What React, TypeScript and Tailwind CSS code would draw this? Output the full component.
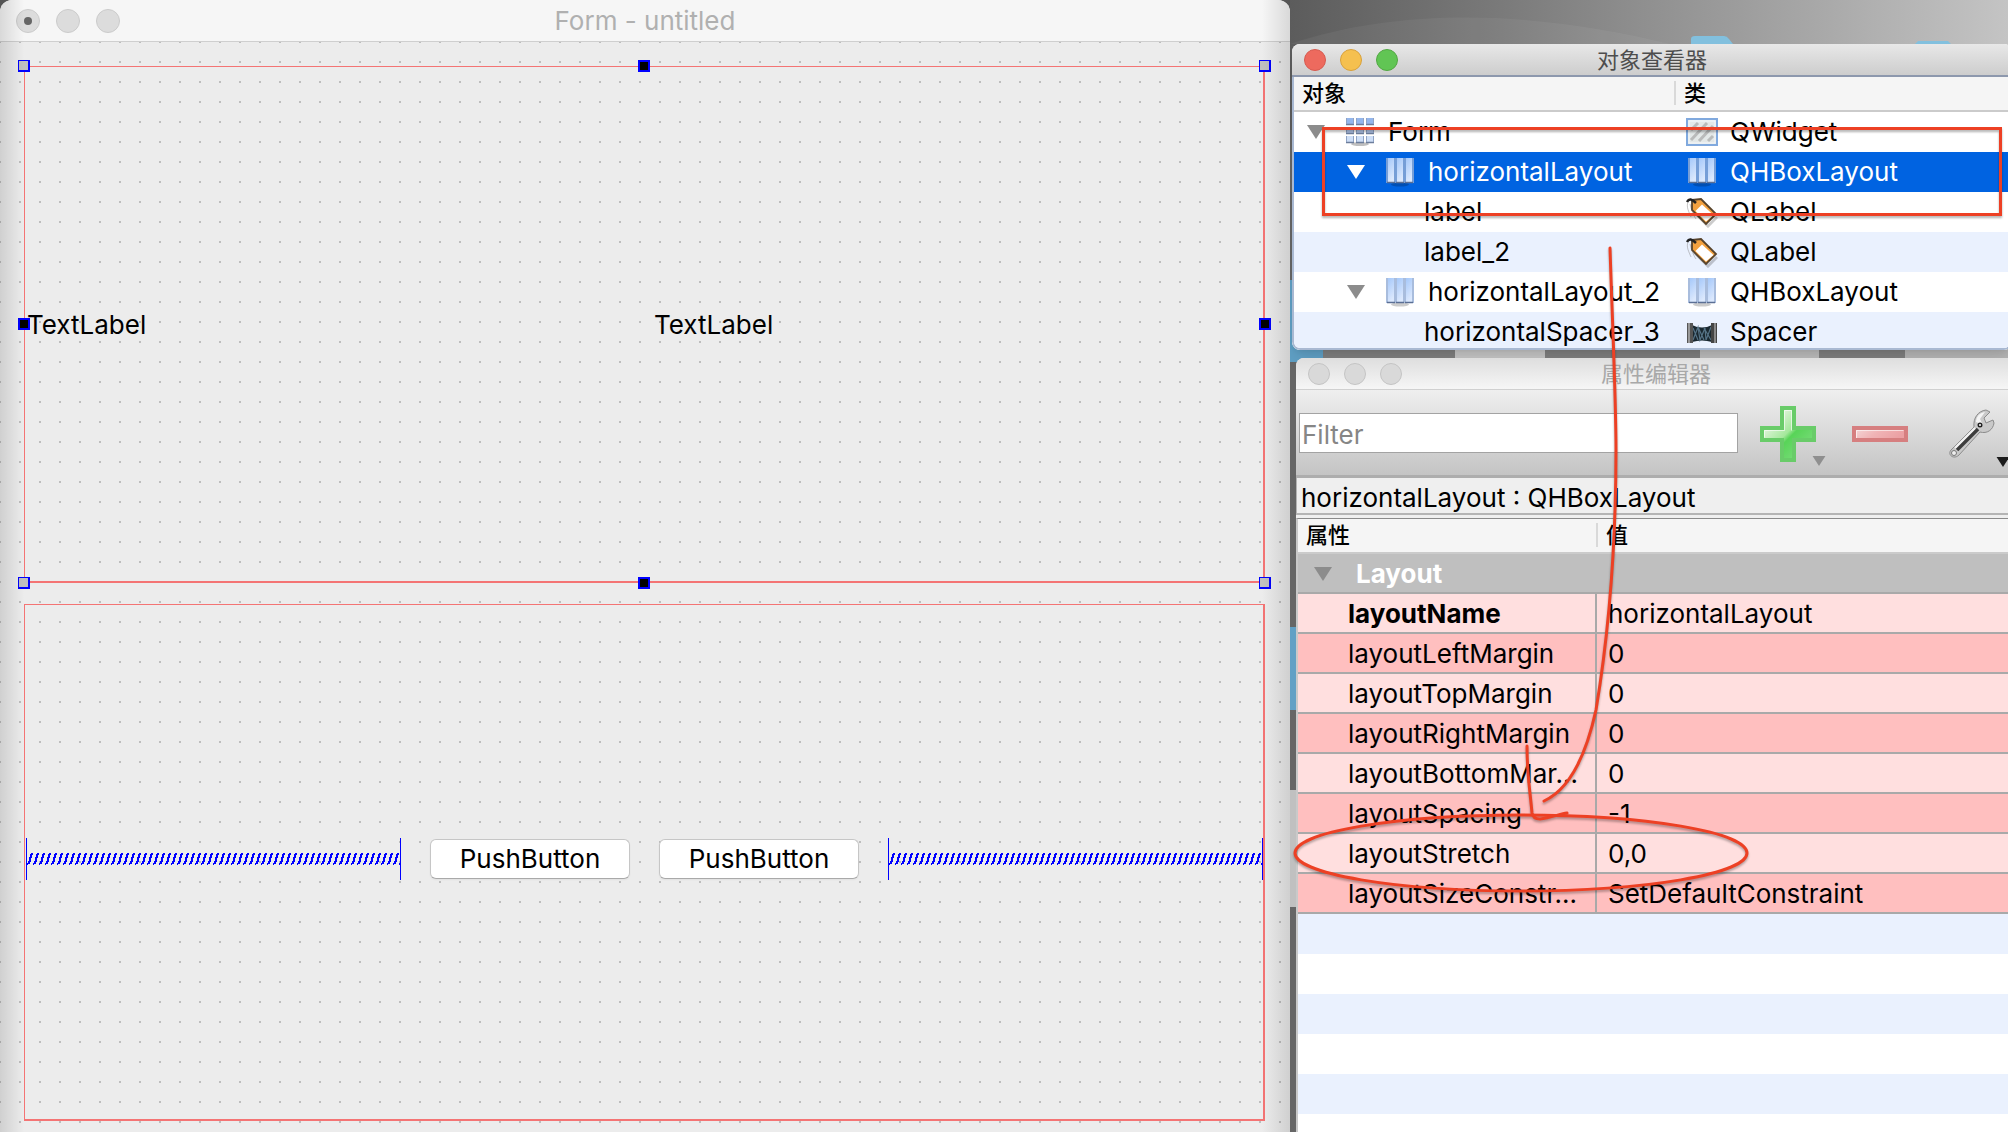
import type { ReactNode } from 'react';
import clsx from 'clsx';

const treeRows = [
  { name: 'Form', type: 'QWidget', indent: 'pl-[13px]', open: true, nameIcon: <GridIcon />, typeIcon: <WidgetIcon /> },
  { name: 'horizontalLayout', type: 'QHBoxLayout', indent: 'pl-[53px]', open: true, selected: true, nameIcon: <ColumnsIcon />, typeIcon: <ColumnsIcon /> },
  { name: 'label', type: 'QLabel', indent: 'pl-[130px]', typeIcon: <TagIcon /> },
  { name: 'label_2', type: 'QLabel', indent: 'pl-[130px]', typeIcon: <TagIcon /> },
  { name: 'horizontalLayout_2', type: 'QHBoxLayout', indent: 'pl-[53px]', open: true, nameIcon: <ColumnsIcon />, typeIcon: <ColumnsIcon /> },
  { name: 'horizontalSpacer_3', type: 'Spacer', indent: 'pl-[130px]', typeIcon: <SpacerIcon /> },
];

const properties = [
  { name: 'layoutName', value: 'horizontalLayout', changed: true },
  { name: 'layoutLeftMargin', value: '0' },
  { name: 'layoutTopMargin', value: '0' },
  { name: 'layoutRightMargin', value: '0' },
  { name: 'layoutBottomMar...', value: '0' },
  { name: 'layoutSpacing', value: '-1' },
  { name: 'layoutStretch', value: '0,0' },
  { name: 'layoutSizeConstr...', value: 'SetDefaultConstraint' },
];

function Triangle({ className }: { className?: string }) {
  return (
    <svg viewBox="0 0 18 14" className={clsx('shrink-0', className)} fill="currentColor">
      <path d="M0 0h18L9 14z" />
    </svg>
  );
}

function GridIcon() {
  return (
    <svg viewBox="0 0 28 30" className="w-7 h-[30px] shrink-0">
      <ellipse cx="14" cy="27" rx="9" ry="2" fill="#000" opacity="0.25" />
      {[0, 10, 20].map((x) =>
        [1, 10, 19].map((y) => (
          <g key={`${x}-${y}`}>
            <rect x={x} y={y} width="8" height="7" rx="1" fill={y === 1 ? '#94b6ec' : y === 10 ? '#b3c9ee' : '#cfdff7'} />
            <path d={`M${x} ${y + 6.500}h8`} stroke="#6d7e9c" strokeWidth="1.500" />
            <path d={`M${x + 0.5} ${y}v6M${x + 7.500} ${y}v6`} stroke="#8fa3c4" strokeWidth="1" />
          </g>
        ))
      )}
    </svg>
  );
}

function ColumnsIcon() {
  return (
    <svg viewBox="0 0 28 30" className="w-7 h-[30px] shrink-0">
      <defs>
        <linearGradient id="col" x1="0" y1="0" x2="0.3" y2="1">
          <stop offset="0" stopColor="#a5c8fa" />
          <stop offset="1" stopColor="#dbe8fd" />
        </linearGradient>
      </defs>
      <ellipse cx="14" cy="27.500" rx="9" ry="2" fill="#000" opacity="0.2" />
      <rect x="0" y="1" width="28" height="25" fill="#94add5" opacity="0.8" />
      <rect x="2" y="1" width="6" height="24" fill="url(#col)" />
      <rect x="11" y="1" width="6" height="24" fill="url(#col)" />
      <rect x="20" y="1" width="6" height="24" fill="url(#col)" />
      <path d="M1 25.500h8M10 25.500h8M19 25.500h8" stroke="#5b6f94" strokeWidth="1.500" />
    </svg>
  );
}

function WidgetIcon() {
  return (
    <svg viewBox="0 0 32 28" className="w-8 h-7 shrink-0">
      <rect x="1" y="1" width="30" height="26" fill="#e3e8e8" stroke="#80a9de" strokeWidth="2" />
      <rect x="3" y="3" width="26" height="22" fill="none" stroke="#f4f7fb" strokeWidth="1" />
      <path d="M5 12l7-7M5 22L21 5M13 23L27 8M22 23l5-5" stroke="#b9bbbb" strokeWidth="3" />
    </svg>
  );
}

function TagIcon() {
  return (
    <svg viewBox="0 0 32 32" className="size-8 shrink-0">
      <path d="M2 6c-2 5 1 10 3 15M4 8c2 8 4 12 6 15" fill="none" stroke="#8d8d8d" strokeWidth="1" opacity="0.5" />
      <path d="M8 16L22 30l9-9" fill="none" stroke="#000" strokeWidth="3" opacity="0.2" />
      <path d="M6 4L15 3L30 18L20 28L6 14z" fill="#f3a13f" stroke="#57432b" strokeWidth="1.800" />
      <path d="M16 8.500L27.500 19L20 25.500L9.500 15z" fill="#fff" />
      <path d="M1 6c2-4 5-3 9 1" fill="none" stroke="#222" strokeWidth="2.500" />
    </svg>
  );
}

function SpacerIcon() {
  return (
    <svg viewBox="0 0 32 28" className="w-8 h-7 shrink-0">
      <path d="M6 7q10 5 20 0v17q-10-3-20 0z" fill="#1a2830" />
      <path d="M7 22l5-13 2 13 5-12 1 12 5-13M7 10l5 12M12 9l6 13M18 10l7 12" fill="none" stroke="#557386" strokeWidth="1.200" />
      <rect x="1" y="5" width="6" height="20" fill="#555" />
      <rect x="2" y="5" width="2" height="20" fill="#999" />
      <rect x="25" y="5" width="6" height="20" fill="#444" />
      <rect x="28" y="5" width="2" height="20" fill="#888" />
    </svg>
  );
}

function PlusIcon() {
  return (
    <svg viewBox="0 0 56 56" className="size-14">
      <defs>
        <linearGradient id="plus" x1="0" y1="0" x2="1" y2="1">
          <stop offset="0.2" stopColor="#e4f5df" />
          <stop offset="0.48" stopColor="#a5e89c" />
          <stop offset="0.55" stopColor="#58d458" />
          <stop offset="0.85" stopColor="#7bdc7b" />
        </linearGradient>
      </defs>
      <path d="M22 2h12v20h20v12H34v20H22V34H2V22h20z" fill="url(#plus)" stroke="#69cc69" strokeWidth="4" />
      <path d="M24.500 24.500V4.500h7v20M4.500 31.500v-7h20" fill="none" stroke="#fff" opacity="0.6" />
    </svg>
  );
}

function MinusIcon() {
  return (
    <svg viewBox="0 0 56 16" className="w-14 h-4">
      <defs>
        <linearGradient id="minus" x1="0" y1="0" x2="1" y2="0.3">
          <stop offset="0" stopColor="#f5d9d9" />
          <stop offset="0.5" stopColor="#f0b4b6" />
          <stop offset="1" stopColor="#eba0a3" />
        </linearGradient>
      </defs>
      <rect x="2" y="2" width="52" height="12" fill="url(#minus)" stroke="#d67f80" strokeWidth="4" />
      <path d="M4.500 12V4.500h47" fill="none" stroke="#fff" opacity="0.6" />
    </svg>
  );
}

function WrenchIcon() {
  return (
    <svg viewBox="0 0 48 50" className="w-12 h-[50px]">
      <path d="M3 41L26 18C25 9 30 2 38 1l4 2-6 6 2 5 7-3 1 3c-1 7-7 11-14 9L11 46c-5 5-12 0-8-5z" fill="#c9c9c9" stroke="#8b8b8b" strokeWidth="1" />
      <path d="M28 13c0-5 3-9 9-10l-5 7 3 6" fill="#f4f4f4" />
      <path d="M9 41L30 20" stroke="#3d3d3d" strokeWidth="3.500" />
      <path d="M7 39L27 19" stroke="#f2f2f2" strokeWidth="2" />
      <circle cx="32" cy="16" r="2.500" fill="#222" />
      <circle cx="32" cy="16" r="1" fill="#fff" />
      <circle cx="6" cy="44" r="2.500" fill="#eee" stroke="#777" />
    </svg>
  );
}

function Handle({ className, active }: { className: string; active?: boolean }) {
  return (
    <span
      className={clsx(
        'absolute size-3 border-[#0000ff]',
        active ? 'bg-black border-2' : 'bg-[#c0c0c0] border-t border-l border-r-2 border-b-2',
        className
      )}
    />
  );
}

// horizontal "spring" drawn by the form editor
function Spring({ id }: { id: string }) {
  return (
    <div className="flex-1 h-[42px] flex items-center border-x border-[#0000ff]">
      <svg className="w-full h-3" shapeRendering="crispEdges">
        <defs>
          <pattern id={id} width="6" height="12" patternUnits="userSpaceOnUse">
            <path d="M0 10h1v2h-1zM1 8h2v3h-2zM2 4h2v5h-2zM3 1h2v4h-2zM4 0h2v2h-2z" fill="#0000ff" />
          </pattern>
        </defs>
        <rect width="100%" height="12" fill={`url(#${id})`} />
      </svg>
    </div>
  );
}

function PushButton({ children }: { children: ReactNode }) {
  return (
    <button className="w-[200px] h-10 rounded-md bg-white border border-[#c6c6c6] border-b-[#a9a9a9] shadow-xs">
      {children}
    </button>
  );
}

function FormWindow() {
  return (
    <section className="relative z-10 flex flex-col rounded-t-xl overflow-hidden bg-[#ececec]">
      <header className="h-[42px] shrink-0 grid grid-cols-[1fr_auto_1fr] items-center px-4 bg-[#f6f6f6] border-b border-[#cfcfcf]">
        <div className="flex gap-4">
          <button aria-label="Close" className="size-6 rounded-full bg-[#dcdcdc] border border-[#cbcbcb] flex items-center justify-center">
            <span className="size-2 rounded-full bg-[#666]" />
          </button>
          <button aria-label="Minimize" className="size-6 rounded-full bg-[#dcdcdc] border border-[#cbcbcb]" />
          <button aria-label="Zoom" className="size-6 rounded-full bg-[#dcdcdc] border border-[#cbcbcb]" />
        </div>
        <h1 className="text-[#b0b0b0]">Form - untitled</h1>
      </header>

      <div className="flex-1 grid grid-rows-2 gap-[21px] pt-6 pb-[11px] pl-6 pr-[25px] bg-[conic-gradient(from_270deg_at_2px_2px,#bdbdbd_90deg,transparent_0)] bg-[length:20px_20px] bg-[position:19px_19px]">
        <div className="relative grid grid-cols-2 items-center border border-r-2 border-b-2 border-[#f47474]">
          <span className="pl-[2px] pt-[2px]">TextLabel</span>
          <span className="pl-[10px] pt-[2px]">TextLabel</span>
          <Handle className="-left-[7px] -top-[7px]" />
          <Handle className="left-1/2 -translate-x-1/2 -top-[7px]" active />
          <Handle className="-right-[8px] -top-[7px]" />
          <Handle className="-left-[7px] top-1/2 -translate-y-1/2" active />
          <Handle className="-right-[8px] top-1/2 -translate-y-1/2" active />
          <Handle className="-left-[7px] -bottom-[8px]" />
          <Handle className="left-1/2 -translate-x-1/2 -bottom-[8px]" active />
          <Handle className="-right-[8px] -bottom-[8px]" />
        </div>
        <div className="flex items-center gap-[29px] pl-px pb-[7px] border border-r-2 border-b-2 border-[#f47474]">
          <Spring id="spring-left" />
          <PushButton>PushButton</PushButton>
          <PushButton>PushButton</PushButton>
          <Spring id="spring-right" />
        </div>
      </div>

      {/* shading along the window edges */}
      <div className="absolute inset-y-0 left-0 w-6 bg-linear-to-r from-black/12 to-transparent pointer-events-none" />
      <div className="absolute inset-y-0 right-0 w-7 bg-linear-to-l from-black/12 to-transparent pointer-events-none" />
    </section>
  );
}

function ObjectInspector() {
  return (
    <section className="ml-[2px] -mr-1 h-[306px] shrink-0 flex flex-col rounded-lg overflow-hidden bg-white shadow-lg">
      <header className="h-[33px] shrink-0 grid grid-cols-[1fr_auto_1fr] items-center px-3 bg-linear-to-b from-[#e8e8e8] to-[#cdcdcd] border-b-2 border-[#8d98ad]">
        <div className="flex gap-[14px]">
          <button aria-label="Close" className="size-[22px] rounded-full bg-[#ed6a5e] border border-[#d65a4f]" />
          <button aria-label="Minimize" className="size-[22px] rounded-full bg-[#f5c04f] border border-[#d8a13c]" />
          <button aria-label="Zoom" className="size-[22px] rounded-full bg-[#61c554] border border-[#52a743]" />
        </div>
        <h2 className="text-[22px] leading-7 text-[#4d4d4d]">对象查看器</h2>
      </header>
      <div className="flex-1 overflow-hidden border-x-2 border-b-2 border-[#a9b9d2] rounded-b-lg">
        <table className="w-full table-fixed border-separate border-spacing-0 text-left whitespace-nowrap">
          <thead className="text-[22px] leading-7 bg-[#f5f5f5]">
            <tr className="h-[35px]">
              <th className="w-[382px] p-0 pb-[2px] pl-2 font-medium border-b-2 border-[#cbcbcb]">对象</th>
              <th className="p-0 pb-[2px] font-medium border-b-2 border-[#cbcbcb]">
                <span className="block -ml-[2px] pl-2 leading-6 border-l-2 border-[#d9d9d9]">类</span>
              </th>
            </tr>
          </thead>
          <tbody>
            {treeRows.map((row, i) => (
              <tr key={row.name} className={clsx('h-10', row.selected ? 'bg-[#0063e1] text-white' : i % 2 ? 'bg-[#eaf1fe]' : 'bg-white')}>
                <td className="p-0">
                  <div className={clsx('flex items-center', row.indent)}>
                    {row.open && (
                      <Triangle className={clsx('w-[18px] h-[14px] mr-[21px]', row.selected ? 'text-white' : 'text-[#8c8c8c]')} />
                    )}
                    {row.nameIcon}
                    <span className={clsx(row.nameIcon && 'ml-[14px]')}>{row.name}</span>
                  </div>
                </td>
                <td className="p-0">
                  <div className="flex items-center pl-[10px]">
                    <span className="w-8 mr-3 flex justify-center">{row.typeIcon}</span>
                    {row.type}
                  </div>
                </td>
              </tr>
            ))}
          </tbody>
        </table>
      </div>
    </section>
  );
}

function PropertyEditor() {
  return (
    <section className="ml-[6px] -mr-2 mt-2 flex-1 flex flex-col rounded-t-lg overflow-hidden bg-[#efefef]">
      <header className="h-8 shrink-0 grid grid-cols-[1fr_auto_1fr] items-center px-3 bg-linear-to-b from-[#dedede] to-[#f6f6f6] border-b border-[#d0d0d0]">
        <div className="flex gap-[14px]">
          <button aria-label="Close" className="size-[22px] rounded-full bg-[#d9d9d9] border border-[#c4c4c4]" />
          <button aria-label="Minimize" className="size-[22px] rounded-full bg-[#d9d9d9] border border-[#c4c4c4]" />
          <button aria-label="Zoom" className="size-[22px] rounded-full bg-[#d9d9d9] border border-[#c4c4c4]" />
        </div>
        <h2 className="text-[22px] leading-7 text-[#a8a8a8]">属性编辑器</h2>
      </header>

      <div className="h-[88px] shrink-0 flex items-center pl-[3px] pr-5 bg-linear-to-b from-[#efefef] to-[#c4c4c4] border-b-3 border-[#adadad]">
        <input
          aria-label="Filter"
          placeholder="Filter"
          className="flex-1 min-w-0 h-10 px-[2px] pt-[3px] bg-white border border-[#a3a3a3] outline-none placeholder:text-[#868686]"
        />
        <button aria-label="Add property" className="relative ml-[22px] mt-[2px]">
          <PlusIcon />
          <Triangle className="absolute -right-[10px] -bottom-1 w-[14px] h-[10px] text-[#8f8f8f]" />
        </button>
        <button aria-label="Remove property" className="ml-9 mt-[2px]">
          <MinusIcon />
        </button>
        <button aria-label="Configure" className="relative ml-10 mt-[2px]">
          <WrenchIcon />
          <Triangle className="absolute -right-[14px] -bottom-2 w-[14px] h-[10px] text-[#1c1c1c]" />
        </button>
      </div>

      <p className="h-[37px] shrink-0 pl-1 pt-[2px] leading-9 border-l border-b-2 border-[#b4b4b4]">horizontalLayout : QHBoxLayout</p>

      <div className="mt-[3px] flex-1 border-t border-l-2 border-t-[#8a8a8a] border-l-[#c9c9c9] bg-[repeating-linear-gradient(#eaf1fe_0_40px,#fff_40px_80px)] bg-[position:0_395px]">
        <table className="w-full table-fixed border-separate border-spacing-0 text-left whitespace-nowrap">
          <thead className="text-[22px] leading-7 bg-[#f5f5f5]">
            <tr className="h-[35px]">
              <th className="w-[299px] p-0 pb-[2px] pl-2 font-medium border-b-2 border-[#cbcbcb]">属性</th>
              <th className="p-0 pb-[2px] font-medium border-b-2 border-[#cbcbcb]">
                <span className="block -ml-px pl-2 leading-6 border-l-2 border-[#d9d9d9]">值</span>
              </th>
            </tr>
          </thead>
          <tbody>
            <tr className="h-10 bg-[#bfbfbf] text-white">
              <th colSpan={2} className="p-0 pt-[2px] font-bold border-b-2 border-[#a9a9a9]">
                <div className="flex items-center pl-4">
                  <Triangle className="w-[18px] h-[14px] mr-6 text-[#8c8c8c]" />
                  Layout
                </div>
              </th>
            </tr>
            {properties.map((prop, i) => (
              <tr key={prop.name} className={clsx('h-10', i % 2 ? 'bg-[#ffbfbf]' : 'bg-[#ffdfdf]')}>
                <td className={clsx('p-0 pt-[2px] pl-[50px] border-b-2 border-r-2 border-[#a9a9a9]', prop.changed && 'font-bold')}>{prop.name}</td>
                <td className="p-0 pt-[2px] pl-[11px] border-b-2 border-[#a9a9a9]">{prop.value}</td>
              </tr>
            ))}
          </tbody>
        </table>
      </div>
    </section>
  );
}

// what shows of the desktop around the tool windows
function Desktop() {
  return (
    <div className="absolute inset-0 bg-[#666]">
      <div className="h-[130px] bg-linear-to-r from-[#5c5c5c] via-[#909090] to-[#c4c4c4]">
        <svg viewBox="0 0 718 44" preserveAspectRatio="none" className="w-full h-11">
          <path d="M0 44C120 4 260 14 380 44z" fill="#fff" opacity="0.05" />
          <path d="M401 44v-5q0-3 4-3h29q3 0 5 3l4 5zM625 44l3-3h30l3 3z" fill="#82c0de" />
        </svg>
      </div>
      <div className="absolute left-0 top-[280px] w-[33px] h-[82px] bg-[#5f9fc4]" />
      <div className="absolute left-[33px] right-0 top-[349px] h-3 flex bg-[#7e7e7e]">
        <span className="w-[90px] ml-[132px] bg-[#c4c4c4]" />
        <span className="w-[119px] ml-[155px] bg-[#bababa]" />
        <span className="flex-1 ml-[86px] bg-[#b4b4b4]" />
      </div>
      <div className="absolute left-0 top-[627px] w-[6px] h-[83px] bg-[#62a0c5]" />
      <div className="absolute left-0 top-[790px] w-[6px] h-[117px] bg-[#c0c0c0]" />
    </div>
  );
}

function Annotations() {
  return (
    <svg
      className="absolute left-0 top-0 z-20 w-[718px] h-[1132px] overflow-visible pointer-events-none drop-shadow-[0_2px_1px_rgba(0,0,0,0.3)]"
      viewBox="1290 0 718 1132"
      fill="none"
      stroke="#ed4024"
      strokeWidth="3"
      strokeLinecap="round"
    >
      <rect x="1323.500" y="128.500" width="677" height="86" />
      <path d="M1610 248C1613 340 1616 400 1616 450C1616 560 1606 650 1596 710C1585 760 1568 790 1544 801" />
      <path d="M1527 746C1527 775 1530 790 1532 813Q1533 819 1540 819C1550 818 1560 814 1567 813" />
      <ellipse cx="1521" cy="853" rx="226" ry="38" />
    </svg>
  );
}

export default function App() {
  return (
    <main className="h-screen overflow-hidden grid grid-cols-[1290fr_718fr] bg-[#555] text-[26px] leading-8 text-black font-['Inter','Noto_Sans_CJK_SC',sans-serif]">
      <FormWindow />
      <div className="relative min-w-0">
        <Desktop />
        <div className="relative h-full flex flex-col pt-11">
          <ObjectInspector />
          <PropertyEditor />
        </div>
        <Annotations />
      </div>
    </main>
  );
}
